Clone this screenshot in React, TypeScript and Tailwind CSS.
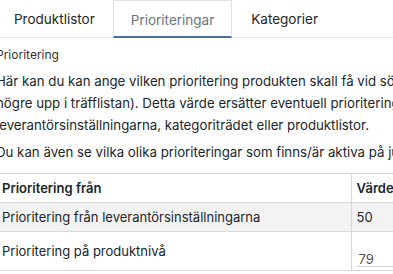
import React from "react";

export default function App() {
  return (
    <div className="w-[393px] h-[274px] overflow-hidden bg-white text-[#212529]" style={{ fontFamily: "Inter, 'Noto Sans', sans-serif" }}>
      <div className="ml-[-4px] w-[600px]">
        <div className="flex h-[38px] border-b border-[#dee2e6] text-[13.5px] leading-[20px]">
          <div className="pl-[17px] pr-[17px] pt-[9px] border-x border-transparent">Produktlistor</div>
          <div className="px-[17px] pt-[9px] border-x border-t border-[#dee2e6] border-b-[2px] border-b-[#4a6fa5] h-[38px] text-[#6c757d]">Prioriteringar</div>
          <div className="px-[18px] pt-[9px] border-x border-transparent">Kategorier</div>
        </div>
        <div className="w-[545px]">
          <div className="mt-[9px] text-[12px] leading-[16px] text-[#333]">Prioritering</div>
          <p className="mt-[7px] text-[13.25px] leading-[22px]">
            Här kan du kan ange vilken prioritering produkten skall få vid sökning (högre värde = högre upp i träfflistan). Detta värde ersätter eventuell prioritering från leverantörsinställningarna, kategoriträdet eller produktlistor.
          </p>
          <p className="mt-[5px] text-[13.25px] leading-[22px] whitespace-nowrap">
            Du kan även se vilka olika prioriteringar som finns/är aktiva på just denna produkt nedan.
          </p>
        </div>
        <table className="mt-[10px] border-collapse text-[13px] leading-[20px]">
          <thead>
            <tr className="border-y border-[#dadada]">
              <th className="w-[355px] px-[6px] py-[4px] text-left font-semibold border-r border-[#dadada]">Prioritering från</th>
              <th className="w-[200px] px-[5px] py-[4px] text-left font-semibold">Värde</th>
            </tr>
          </thead>
          <tbody>
            <tr className="bg-[#f3f3f3]">
              <td className="px-[6px] py-[4px] border-r border-b border-[#dadada]">Prioritering från leverantörsinställningarna</td>
              <td className="px-[5px] py-[4px] border-b border-[#dadada]">50</td>
            </tr>
            <tr className="h-[39px]">
              <td className="px-[6px] py-0 align-middle border-r border-b border-[#dadada]">Prioritering på produktnivå</td>
              <td className="px-[5px] pt-0 pb-[3px] align-bottom border-b border-[#dadada]">
                <div className="border-b border-[#d4d4d4] leading-[14px] pl-[2px] text-[#555]">79</div>
              </td>
            </tr>
          </tbody>
        </table>
      </div>
    </div>
  );
}
